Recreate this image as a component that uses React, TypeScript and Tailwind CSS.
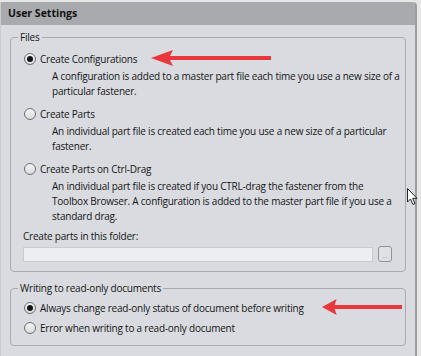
const font = { fontFamily: '"Open Sans", "Noto Sans", sans-serif' };

function Radio({ checked }: { checked?: boolean }) {
  return (
    <span className="flex size-[12px] shrink-0 items-center justify-center rounded-full border border-[#6b6e75] bg-gradient-to-b from-[#f4f4f4] to-[#dcdcdc]">
      {checked && <span className="size-[6px] rounded-full bg-[#141414]" />}
    </span>
  );
}

function Option({
  label,
  checked,
  lines,
}: {
  label: string;
  checked?: boolean;
  lines?: string[];
}) {
  return (
    <div className="flex flex-col">
      <div className="flex h-[16px] items-center gap-[4px] pl-[1px]">
        <Radio checked={checked} />
        <span>{label}</span>
      </div>
      {lines && (
        <div className="mt-[2px] pl-[29px] leading-[15px]">
          {lines.map((l) => (
            <div key={l} className="whitespace-nowrap">
              {l}
            </div>
          ))}
        </div>
      )}
    </div>
  );
}

function Arrow({ className }: { className: string }) {
  return (
    <svg className={className} viewBox="0 0 120 18" fill="#e8383b" preserveAspectRatio="none">
      <path d="M0 9 L22 1 L19 7 L120 7 L120 11 L19 11 L22 17 Z" />
    </svg>
  );
}

export default function App() {
  return (
    <div
      className="relative h-[356px] w-[421px] overflow-hidden bg-[#e6e6e7] pt-[2px] text-[10px] tracking-[-0.22px] text-[#161616]"
      style={font}
    >
      <div className="flex h-[354px] w-[417px] flex-col rounded-tr-[4px] border-r-2 border-l border-[#9c9ea4] border-l-[#c9cbd0] bg-[#d9dbe0]">
        <div className="flex h-[23px] items-center rounded-tr-[3px] bg-[#a9aaae] px-[7px] text-[10.5px] font-bold tracking-normal text-[#111]">
          User Settings
        </div>

        <div className="flex flex-col gap-[8px] pt-[4px] pl-[9px] pr-[9px]">
          <fieldset className="min-w-0 rounded-[4px] border border-[#a7abb4] pr-[13px] pb-[9px] pl-[12px]">
            <legend className="ml-[-5px] h-[16px] px-[2px] leading-[16px]">Files</legend>
            <div className="flex flex-col gap-[7px] pt-[6px]">
              <Option
                checked
                label="Create Configurations"
                lines={[
                  "A configuration is added to a master part file each time you use a new size of a",
                  "particular fastener.",
                ]}
              />
              <Option
                label="Create Parts"
                lines={[
                  "An individual part file is created each time you use a new size of a particular",
                  "fastener.",
                ]}
              />
              <Option
                label="Create Parts on Ctrl-Drag"
                lines={[
                  "An individual part file is created if you CTRL-drag the fastener from the",
                  "Toolbox Browser. A configuration is added to the master part file if you use a",
                  "standard drag.",
                ]}
              />
            </div>
            <div className="mt-[4px] leading-[16px]">Create parts in this folder:</div>
            <div className="mt-[2px] flex items-center gap-[5px]">
              <div className="h-[15px] min-w-0 flex-1 border border-[#c9cbd0] bg-[#eceef1]" />
              <div className="flex h-[16px] w-[14px] items-end justify-center rounded-[3px] border border-[#8f929a] bg-[#dfe1e5] pb-[2px] text-[7px] leading-[7px] text-[#9a9ca2]">
                ...
              </div>
            </div>
          </fieldset>

          <fieldset className="min-w-0 rounded-[4px] border border-[#a7abb4] pr-[13px] pb-[9px] pl-[12px]">
            <legend className="ml-[-5px] h-[16px] px-[2px] leading-[16px]">
              Writing to read-only documents
            </legend>
            <div className="flex flex-col gap-[4px] pt-[4px]">
              <Option checked label="Always change read-only status of document before writing" />
              <Option label="Error when writing to a read-only document" />
            </div>
          </fieldset>
        </div>
      </div>

      <Arrow className="absolute top-[49px] left-[151px] h-[18px] w-[120px]" />
      <Arrow className="absolute top-[298px] left-[322px] h-[18px] w-[80px]" />

      <svg className="absolute top-[188px] left-[407px] h-[18px] w-[12px]" viewBox="0 0 12 18">
        <path
          d="M0.5 0.5 L0.5 14 L3.5 11 L6 16.5 L8 15.5 L5.7 10.3 L10 10.3 Z"
          fill="#fff"
          stroke="#222"
          strokeWidth="1"
          strokeLinejoin="round"
        />
      </svg>
    </div>
  );
}
